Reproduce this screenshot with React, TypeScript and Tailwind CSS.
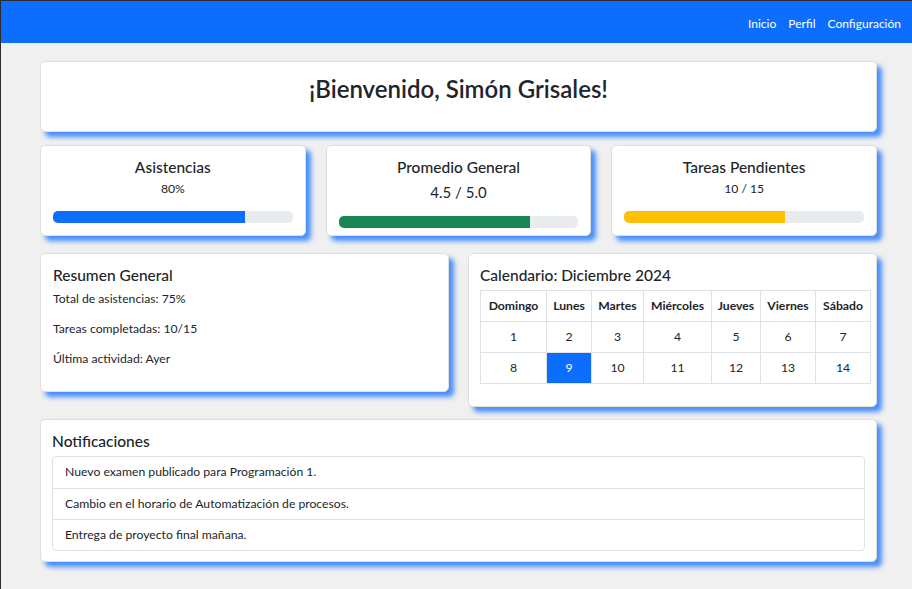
import React from 'react';

const font = { fontFamily: '"Segoe UI", Lato, "Noto Sans", sans-serif' };

const card = 'bg-white border border-[#dfdfdf] rounded-[5px] shadow-[5px_5px_5px_rgba(13,110,253,0.75)]';

const stats = [
  { title: 'Asistencias', value: '80%', pct: 80, bar: 'bg-[#0d6efd]', big: false },
  { title: 'Promedio General', value: '4.5 / 5.0', pct: 80, bar: 'bg-[#198754]', big: true },
  { title: 'Tareas Pendientes', value: '10 / 15', pct: 67, bar: 'bg-[#ffc107]', big: false },
];

const days = ['Domingo', 'Lunes', 'Martes', 'Miércoles', 'Jueves', 'Viernes', 'Sábado'];
const weeks = [
  [1, 2, 3, 4, 5, 6, 7],
  [8, 9, 10, 11, 12, 13, 14],
];
const colW = ['w-[66px]', 'w-[45px]', 'w-[52px]', 'w-[68px]', 'w-[49px]', 'w-[55px]', 'w-[55px]'];

const notifications = [
  'Nuevo examen publicado para Programación 1.',
  'Cambio en el horario de Automatización de procesos.',
  'Entrega de proyecto final mañana.',
];

export default function App() {
  return (
    <div style={font} className="min-h-screen bg-[#f0f0f0] text-[#212529] border-t border-l border-[#2b2b2b]">
      <nav className="h-[42px] bg-[#0d6efd] flex items-center justify-end pt-[3px] pr-[11px] gap-[12px] text-[12px] text-white">
        <a>Inicio</a>
        <a>Perfil</a>
        <a>Configuración</a>
      </nav>

      <main className="pl-[39px] pr-[35px] pt-[18px] pb-[24px] flex flex-col">
        <section className={`${card} h-[71px] flex justify-center pt-[12px]`}>
          <h1 className="text-[24px] leading-[30px] font-semibold">¡Bienvenido, Simón Grisales!</h1>
        </section>

        <div className="mt-[13px] grid grid-cols-3 gap-[20px]">
          {stats.map((s) => (
            <div key={s.title} className={`${card} h-[91px] px-[12px] pt-[11px] flex flex-col items-center`}>
              <h5 className="text-[15.5px] font-medium leading-[20px]">{s.title}</h5>
              <p className={s.big ? 'mt-[5px] text-[15px] leading-[20px]' : 'mt-[4px] text-[12.2px] leading-[16px]'}>{s.value}</p>
              <div className="w-full h-[12px] rounded-[5px] bg-[#e9ecef] overflow-hidden mt-[14px]">
                <div className={`h-full ${s.bar}`} style={{ width: `${s.pct}%` }} />
              </div>
            </div>
          ))}
        </div>

        <div className="mt-[17px] grid grid-cols-2 gap-[19px] items-start">
          <div className={`${card} h-[139px] px-[12px] pt-[11px]`}>
            <h5 className="text-[15.5px] font-medium leading-[20px]">Resumen General</h5>
            <div className="mt-[5px] text-[12.2px] leading-[18px] flex flex-col gap-[12px]">
              <p>Total de asistencias: 75%</p>
              <p>Tareas completadas: 10/15</p>
              <p>Última actividad: Ayer</p>
            </div>
          </div>

          <div className={`${card} h-[154px] px-[11px] pt-[11px]`}>
            <h5 className="text-[15.5px] font-medium leading-[20px]">Calendario: Diciembre 2024</h5>
            <table className="mt-[5px] w-[391px] border-collapse text-[12.2px] text-center">
              <thead>
                <tr className="h-[31px]">
                  {days.map((d, i) => (
                    <th key={d} className={`${colW[i]} border border-[#dee2e6] font-bold`}>{d}</th>
                  ))}
                </tr>
              </thead>
              <tbody>
                {weeks.map((w, wi) => (
                  <tr key={wi} className="h-[31px]">
                    {w.map((n) => (
                      <td
                        key={n}
                        className={`border border-[#dee2e6] ${n === 9 ? 'bg-[#0d6efd] text-white' : ''}`}
                      >
                        {n}
                      </td>
                    ))}
                  </tr>
                ))}
              </tbody>
            </table>
          </div>
        </div>

        <section className={`${card} mt-[12px] h-[143px] px-[11px] pt-[11px]`}>
          <h5 className="text-[15.5px] font-medium leading-[20px]">Notificaciones</h5>
          <ul className="mt-[5px] border border-[#dee2e6] rounded-[4px] text-[12.2px]">
            {notifications.map((n, i) => (
              <li key={n} className={`h-[31px] px-[12px] flex items-center ${i > 0 ? 'border-t border-[#dee2e6]' : ''}`}>
                {n}
              </li>
            ))}
          </ul>
        </section>
      </main>
    </div>
  );
}
